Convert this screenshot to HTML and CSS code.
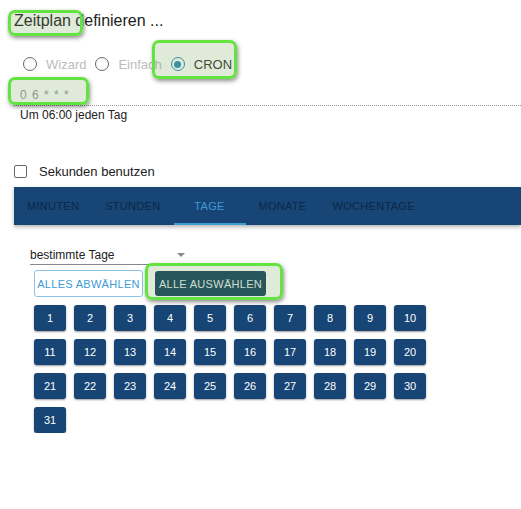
FILE: index.html
```html
<!DOCTYPE html>
<html>
<head>
    <meta charset="utf-8">
    <link rel="stylesheet" href="styles.css">
</head>
<body>
    <div class="page">
        <h1 class="title">Zeitplan definieren ...</h1>

        <div class="modes">
            <label class="mode disabled"><span class="radio"></span>Wizard</label>
            <label class="mode disabled"><span class="radio"></span>Einfach</label>
            <label class="mode"><span class="radio checked"></span>CRON</label>
        </div>

        <div class="cron-field">
            <div class="cron-input">0 6 * * *</div>
        </div>
        <div class="cron-text">Um 06:00 jeden Tag</div>

        <label class="seconds"><span class="checkbox"></span>Sekunden benutzen</label>

        <div class="tabs">
            <div class="tab">Minuten</div>
            <div class="tab">Stunden</div>
            <div class="tab active">Tage</div>
            <div class="tab">Monate</div>
            <div class="tab">Wochentage</div>
        </div>

        <div class="panel">
            <div class="select">
                <span>bestimmte Tage</span>
                <span class="caret"></span>
            </div>
            <div class="actions">
                <button class="btn btn-outline">Alles abwählen</button>
                <button class="btn btn-solid">Alle auswählen</button>
            </div>
            <div class="days">
                <button class="day">1</button><button class="day">2</button><button class="day">3</button><button class="day">4</button><button class="day">5</button>
                <button class="day">6</button><button class="day">7</button><button class="day">8</button><button class="day">9</button><button class="day">10</button>
                <button class="day">11</button><button class="day">12</button><button class="day">13</button><button class="day">14</button><button class="day">15</button>
                <button class="day">16</button><button class="day">17</button><button class="day">18</button><button class="day">19</button><button class="day">20</button>
                <button class="day">21</button><button class="day">22</button><button class="day">23</button><button class="day">24</button><button class="day">25</button>
                <button class="day">26</button><button class="day">27</button><button class="day">28</button><button class="day">29</button><button class="day">30</button>
                <button class="day">31</button>
            </div>
        </div>
    </div>

    <!-- Markierungen ueber dem Screenshot -->
    <div class="mark mark-title"></div>
    <div class="mark mark-cron"></div>
    <div class="mark mark-input"></div>
    <div class="mark mark-select-all"></div>
</body>
</html>
```

FILE: styles.css
```css
html,
body {
    margin: 0;
    background: #fff;
}

body {
    font-family: "Liberation Sans", Arial, sans-serif;
    color: #222;
    overflow: hidden;
}

.page {
    padding: 11px 0 0 14px;
}

.title {
    margin: 0;
    font-size: 16px;
    font-weight: normal;
    line-height: 20px;
    color: #222;
}

.modes {
    display: flex;
    align-items: center;
    margin: 24px 0 0 9px;
    height: 18px;
}

.mode {
    display: flex;
    align-items: center;
    font-size: 13px;
    color: #333;
    margin-right: 9px;
}

.mode.disabled {
    color: #bbb;
}

.radio {
    width: 12px;
    height: 12px;
    border: 1.5px solid #666;
    border-radius: 50%;
    margin-right: 9px;
    position: relative;
}

.radio.checked {
    border-color: #2a8fb5;
}

.radio.checked::after {
    content: "";
    position: absolute;
    left: 2.5px;
    top: 2.5px;
    width: 7px;
    height: 7px;
    border-radius: 50%;
    background: #2a8fb5;
}

.cron-field {
    margin-top: 6px;
    border-bottom: 1px dotted #999;
    height: 27px;
    box-sizing: border-box;
}

.cron-input {
    padding: 9px 0 0 6px;
    font-size: 12px;
    line-height: 14px;
    color: #999;
    letter-spacing: 1px;
}

.cron-text {
    font-size: 12px;
    color: #222;
    margin: 2px 0 0 6px;
    line-height: 15px;
}

.seconds {
    display: flex;
    align-items: center;
    margin-top: 41px;
    font-size: 13px;
    color: #222;
}

.checkbox {
    width: 11px;
    height: 11px;
    border: 1.5px solid #666;
    border-radius: 2px;
    margin-right: 12px;
}

.tabs {
    display: flex;
    margin-top: 8px;
    height: 38px;
    background: #174575;
    box-shadow: 0 2px 4px rgba(0, 0, 0, 0.3);
}

.tab {
    min-width: 72px;
    padding: 0 13px;
    box-sizing: border-box;
    text-align: center;
    font-size: 11px;
    letter-spacing: 0.3px;
    text-transform: uppercase;
    line-height: 38px;
    color: #0e2846;
}

.tab.active {
    color: #3e9bd6;
    box-shadow: inset 0 -2px 0 #3e9bd6;
}

.panel {
    padding: 20px 0 0 16px;
}

.select {
    width: 160px;
    display: flex;
    justify-content: space-between;
    align-items: center;
    font-size: 12px;
    color: #222;
    height: 19px;
    border-bottom: 1px solid #888;
}

.caret {
    width: 0;
    height: 0;
    border-left: 4px solid transparent;
    border-right: 4px solid transparent;
    border-top: 4px solid #888;
    margin-right: 5px;
}

.actions {
    display: flex;
    align-items: center;
    margin: 5px 0 0 4px;
}

.btn {
    font-family: inherit;
    font-size: 11px;
    text-transform: uppercase;
    letter-spacing: 0.3px;
    white-space: nowrap;
    border-radius: 3px;
    height: 27px;
    padding: 0;
    cursor: pointer;
}

.btn-outline {
    background: #fff;
    color: #3e9bd6;
    border: 1px solid #8cc3e8;
    width: 109px;
}

.btn-solid {
    background: #12405e;
    color: #e8eef0;
    border: none;
    width: 111px;
    height: 25px;
    margin-left: 12px;
}

.days {
    display: grid;
    grid-template-columns: repeat(10, 32px);
    gap: 8px;
    margin: 8px 0 0 4px;
}

.day {
    height: 26px;
    border: none;
    border-radius: 3px;
    background: #174575;
    color: #fff;
    font-family: inherit;
    font-size: 11px;
    padding: 0;
    box-shadow: 0 1px 2px rgba(0, 0, 0, 0.4);
}

.mark {
    position: absolute;
    border: 3px solid #63e33f;
    border-radius: 7px;
    background: rgba(110, 160, 80, 0.22);
    box-shadow: 1px 2px 4px rgba(0, 0, 0, 0.45);
    box-sizing: border-box;
}

.mark-title {
    left: 8px;
    top: 10px;
    width: 75px;
    height: 26px;
}

.mark-cron {
    left: 152px;
    top: 40px;
    width: 85px;
    height: 39px;
}

.mark-input {
    left: 8px;
    top: 77px;
    width: 81px;
    height: 28px;
}

.mark-select-all {
    left: 145px;
    top: 263px;
    width: 138px;
    height: 37px;
}
```
